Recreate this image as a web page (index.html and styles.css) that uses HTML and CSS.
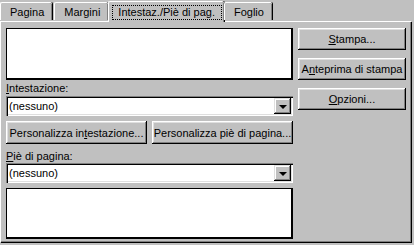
FILE: index.html
```html
<!DOCTYPE html>
<html lang="it">

<head>
    <meta charset="utf-8">
    <title>Imposta pagina</title>
    <link rel="stylesheet" href="styles.css">
</head>

<body>
    <div class="dialog">
        <div class="tabs">
            <div class="tab">Pagina</div>
            <div class="tab">Margini</div>
            <div class="tab active"><span class="focus">Intestaz./Piè di pag.</span></div>
            <div class="tab">Foglio</div>
        </div>

        <div class="panel">
            <div class="left-col">
                <div class="preview"></div>

                <div class="label"><u>I</u>ntestazione:</div>
                <div class="combo">
                    <span class="combo-text">(nessuno)</span>
                    <span class="combo-btn"><span class="arrow"></span></span>
                </div>

                <div class="btn-row">
                    <button class="btn">Personalizza in<u>t</u>estazione...</button>
                    <button class="btn">Personalizza piè di pa<u>g</u>ina...</button>
                </div>

                <div class="label"><u>P</u>iè di pagina:</div>
                <div class="combo">
                    <span class="combo-text">(nessuno)</span>
                    <span class="combo-btn"><span class="arrow"></span></span>
                </div>

                <div class="preview footer"></div>
            </div>

            <div class="right-col">
                <button class="btn side"><u>S</u>tampa...</button>
                <button class="btn side">A<u>n</u>teprima di stampa</button>
                <button class="btn side"><u>O</u>pzioni...</button>
            </div>
        </div>
    </div>
</body>

</html>
```

FILE: styles.css
```css
* {
    margin: 0;
    padding: 0;
    box-sizing: border-box;
}

body {
    font-family: 'Liberation Sans', Arial, sans-serif;
    font-size: 11px;
    background: #c0c0c0;
    color: #000;
    width: 414px;
    height: 245px;
    overflow: hidden;
}

u {
    text-decoration: underline;
    text-underline-offset: 1px;
}

.dialog {
    width: 411px;
    height: 242px;
    display: flex;
    flex-direction: column;
}

.tabs {
    display: flex;
    align-items: flex-end;
    height: 21px;
    position: relative;
    z-index: 1;
}

.tab {
    height: 18px;
    padding: 3px 8px 0 9px;
    border-left: 1px solid #fff;
    border-top: 1px solid #fff;
    border-top-left-radius: 2px;
    border-top-right-radius: 2px;
    box-shadow: inset -1px 0 #808080, 1px 0 #000;
    margin-right: 2px;
    margin-bottom: 1px;
    white-space: nowrap;
}

.tab.active {
    height: 21px;
    margin-bottom: -1px;
    padding: 3px 2px 0 3px;
    background: #c0c0c0;
    margin-left: -2px;
    margin-right: 0;
}

.focus {
    display: inline-block;
    border: 1px dotted #000;
    padding: 0 6px 0 5px;
    line-height: 13px;
}

.panel {
    flex: 1;
    display: flex;
    gap: 5px;
    padding: 6px 0 0 5px;
    border-top: 1px solid #fff;
    border-left: 1px solid #fff;
    box-shadow: inset -1px -1px #808080, 1px 1px #000;
}

.left-col {
    width: 287px;
    display: flex;
    flex-direction: column;
}

.right-col {
    width: 108px;
    display: flex;
    flex-direction: column;
    gap: 8px;
}

.preview {
    height: 52px;
    background: #fff;
    border-top: 1px solid #000;
    border-left: 1px solid #000;
    border-right: 2px solid #000;
    border-bottom: 2px solid #000;
}

.preview.footer {
    margin-top: 5px;
    height: 51px;
}

.label {
    margin-top: 2px;
    height: 14px;
    line-height: 13px;
}

.btn-row + .label {
    margin-top: 6px;
    height: 13px;
}

.combo {
    height: 20px;
    background: #fff;
    display: flex;
    align-items: center;
    justify-content: space-between;
    padding: 2px;
    box-shadow: inset 1px 1px #808080, inset 2px 2px #000, inset -1px -1px #fff, inset -2px -2px #dfdfdf;
}

.combo-text {
    padding-left: 1px;
}

.combo-btn {
    width: 17px;
    height: 16px;
    background: #c0c0c0;
    display: flex;
    align-items: center;
    justify-content: center;
    box-shadow: inset -1px -1px #000, inset 1px 1px #dfdfdf, inset -2px -2px #808080, inset 2px 2px #fff;
}

.arrow {
    width: 0;
    height: 0;
    border-left: 4px solid transparent;
    border-right: 4px solid transparent;
    border-top: 4px solid #000;
    margin-top: 1px;
}

.btn-row {
    display: flex;
    justify-content: space-between;
    margin-top: 5px;
}

.btn-row .btn {
    width: 141px;
}

.btn {
    height: 23px;
    font: inherit;
    color: #000;
    background: #c0c0c0;
    border: none;
    white-space: nowrap;
    box-shadow: inset -1px -1px #000, inset 1px 1px #fff, inset -2px -2px #808080, inset 2px 2px #dfdfdf;
}

.btn.side {
    width: 108px;
    height: 22px;
}
```
